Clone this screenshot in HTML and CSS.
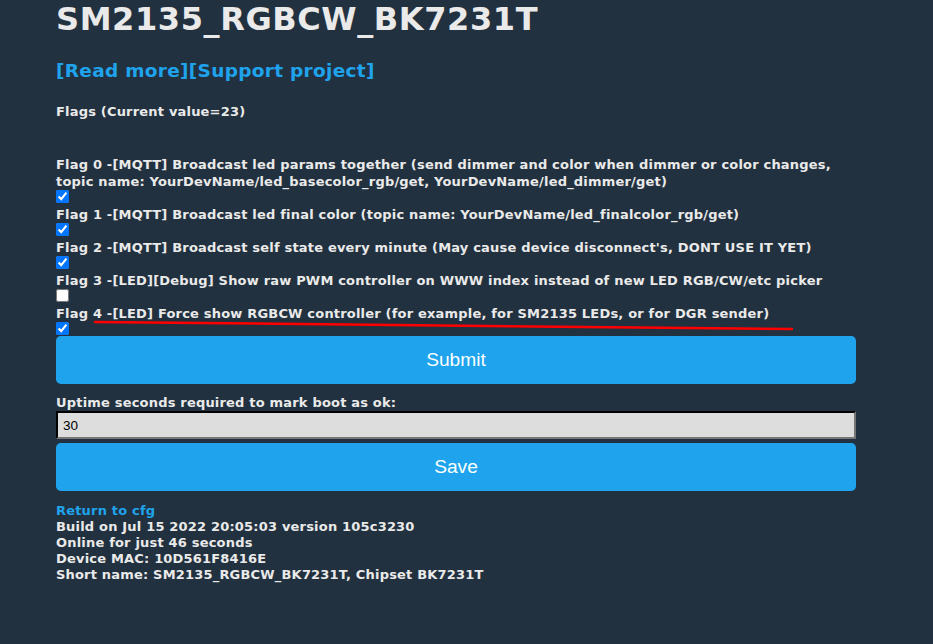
FILE: index.html
```html
<!DOCTYPE html>
<html lang="en">
<head>
  <meta charset="UTF-8">
  <title>SM2135_RGBCW_BK7231T</title>
  <link rel="stylesheet" href="styles.css">
</head>
<body>
  <div class="page">
    <h1>SM2135_RGBCW_BK7231T</h1>
    <h3 class="links"><a href="#">[Read more]</a><a href="#">[Support project]</a></h3>

    <form class="flags">
      <p class="flags-title">Flags (Current value=23)</p>
      <div class="flag">
        <label for="flag0">Flag 0 -[MQTT] Broadcast led params together (send dimmer and color when dimmer or color changes, topic name: YourDevName/led_basecolor_rgb/get, YourDevName/led_dimmer/get)</label>
        <input type="checkbox" id="flag0" checked>
      </div>
      <div class="flag">
        <label for="flag1">Flag 1 -[MQTT] Broadcast led final color (topic name: YourDevName/led_finalcolor_rgb/get)</label>
        <input type="checkbox" id="flag1" checked>
      </div>
      <div class="flag">
        <label for="flag2">Flag 2 -[MQTT] Broadcast self state every minute (May cause device disconnect's, DONT USE IT YET)</label>
        <input type="checkbox" id="flag2" checked>
      </div>
      <div class="flag">
        <label for="flag3">Flag 3 -[LED][Debug] Show raw PWM controller on WWW index instead of new LED RGB/CW/etc picker</label>
        <input type="checkbox" id="flag3">
      </div>
      <div class="flag">
        <label for="flag4">Flag 4 -[LED] Force show RGBCW controller (for example, for SM2135 LEDs, or for DGR sender)</label>
        <input type="checkbox" id="flag4" checked>
      </div>
      <button type="submit">Submit</button>
    </form>

    <form class="boot">
      <label for="boot_ok_delay">Uptime seconds required to mark boot as ok:</label>
      <input type="text" id="boot_ok_delay" class="field" value="30">
      <button type="submit">Save</button>
    </form>

    <div class="footer">
      <a href="#">Return to cfg</a><br>
      Build on Jul 15 2022 20:05:03 version 105c3230<br>
      Online for just 46 seconds<br>
      Device MAC: 10D561F8416E<br>
      Short name: SM2135_RGBCW_BK7231T, Chipset BK7231T
    </div>

    <!-- red annotation stroke under flag 4 -->
    <svg class="mark" width="710" height="12" viewBox="0 0 710 12">
      <path d="M2 3 Q 350 5 699 10" stroke="#ff0000" stroke-width="2.5" fill="none" stroke-linecap="round"/>
    </svg>
  </div>
</body>
</html>
```

FILE: styles.css
```css
body {
  margin: 0;
  background: #22313f;
  color: #eaeaea;
  font-family: "DejaVu Sans", Verdana, sans-serif;
  font-weight: bold;
  font-size: 13px;
  line-height: 16px;
  letter-spacing: 0.19px;
}
.page {
  position: relative;
  width: 800px;
  margin-left: 56px;
}
h1 {
  margin: -1px 0 0;
  font-size: 32px;
  line-height: 40px;
  letter-spacing: 0.6px;
}
a {
  color: #1fa3ec;
  text-decoration: none;
}
.links {
  margin: 19px 0 0;
  font-size: 18.5px;
  line-height: 26px;
  letter-spacing: 0.3px;
}
.flags-title {
  margin: 20px 0 36px;
}
.flag label {
  display: block;
  line-height: 17px;
}
.flag input {
  display: block;
  width: 13px;
  height: 13px;
  margin: 0 0 3px;
}
.flag:last-of-type input {
  margin-bottom: 1px;
}
button {
  display: block;
  width: 100%;
  border: 0;
  border-radius: 4.8px;
  background: #1fa3ec;
  color: #faffff;
  font-family: "Liberation Sans", Arial, sans-serif;
  font-size: 19.2px;
  line-height: 38px;
  letter-spacing: 0;
  padding: 5px;
  cursor: pointer;
}
.boot {
  margin-top: 11px;
}
.boot label {
  display: block;
}
.field {
  display: block;
  width: 100%;
  box-sizing: border-box;
  height: 28px;
  margin: 0 0 4px;
  padding: 4px 5px;
  border: 2px inset #767676;
  border-top-color: #1b1b1b;
  border-left-color: #1b1b1b;
  background: #dddddd;
  color: #000;
  font-family: "Liberation Sans", Arial, sans-serif;
  font-size: 13.5px;
  font-weight: normal;
  letter-spacing: 0;
}
.footer {
  margin-top: 12px;
}
.mark {
  position: absolute;
  left: 37px;
  top: 320px;
}
```
